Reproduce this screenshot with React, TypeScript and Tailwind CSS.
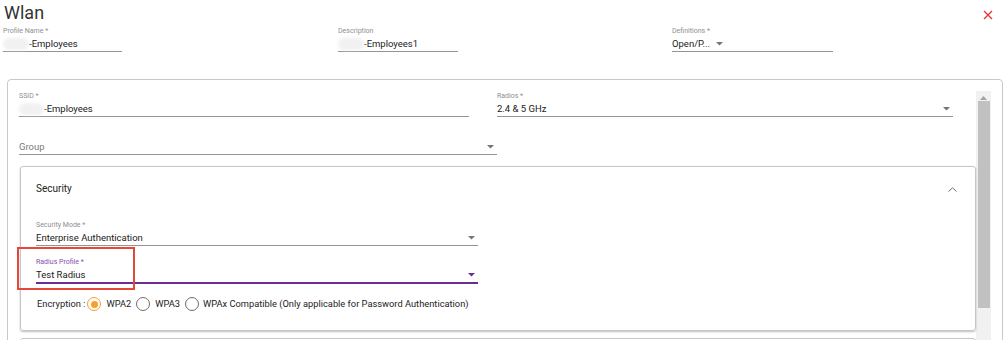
import React from 'react';

function Caret({ color = '#757575' }: { color?: string }) {
  return (
    <svg width="7" height="4" viewBox="0 0 7 4" className="shrink-0">
      <path d="M0 0h7L3.5 3.6z" fill={color} />
    </svg>
  );
}

function Blob({ w }: { w: number }) {
  return (
    <span
      className="inline-block h-[12px] shrink-0 rounded-full bg-[#f1f1f1] blur-[1.5px]"
      style={{ width: w }}
    />
  );
}

type FieldProps = {
  label?: string;
  value?: string;
  placeholder?: string;
  width: number;
  blob?: number;
  caret?: 'end' | 'inline';
  focused?: boolean;
  className?: string;
};

function Field({ label, value, placeholder, width, blob, caret, focused, className = '' }: FieldProps) {
  return (
    <div className={`flex flex-col ${className}`} style={{ width }}>
      <div
        className={`mb-[1px] h-[9px] text-[7px] leading-[9px] ${focused ? 'text-[#8a4db3]' : 'text-[#8f8f8f]'}`}
      >
        {label}
      </div>
      <div
        className={`flex h-[14px] items-center pr-[3px] ${
          focused ? 'border-b-2 border-[#6b2d91]' : 'border-b border-[#949494]'
        } box-content`}
      >
        {blob ? <Blob w={blob} /> : null}
        {value ? <span className="text-[9.5px] leading-[14px] text-[#212121] whitespace-nowrap">{value}</span> : null}
        {placeholder ? (
          <span className="text-[9.5px] leading-[14px] text-[#7a7a7a]">{placeholder}</span>
        ) : null}
        {caret === 'inline' ? (
          <span className="ml-[6px]">
            <Caret />
          </span>
        ) : null}
        {caret === 'end' ? (
          <span className="ml-auto">
            <Caret color={focused ? '#6b2d91' : '#757575'} />
          </span>
        ) : null}
      </div>
    </div>
  );
}

function Radio({ checked }: { checked?: boolean }) {
  return checked ? (
    <span className="flex h-[14px] w-[14px] items-center justify-center rounded-full border-[1.5px] border-[#f5a02a]">
      <span className="h-[7px] w-[7px] rounded-full bg-[#f5a02a]" />
    </span>
  ) : (
    <span className="h-[14px] w-[14px] rounded-full border-[1.5px] border-[#6e6e6e]" />
  );
}

export default function App() {
  return (
    <div className="h-[340px] w-[1008px] overflow-hidden bg-white font-['Roboto',sans-serif]">
      {/* header */}
      <div className="flex h-[27px] items-start justify-between">
        <h1 className="pl-[4px] pt-[2px] text-[18px] font-normal leading-[22px] text-[#333]">Wlan</h1>
        <svg width="10" height="10" viewBox="0 0 10 10" className="mr-[15px] mt-[10px]">
          <path d="M1 1l8 8M9 1l-8 8" stroke="#e53935" strokeWidth="1.4" />
        </svg>
      </div>

      {/* profile fields */}
      <div className="flex pl-[3px]">
        <Field label="Profile Name *" value="-Employees" width={119} blob={26} />
        <Field label="Description" value="-Employees1" width={120} blob={26} className="ml-[216px]" />
        <Field label="Definitions *" value="Open/P..." width={161} caret="inline" className="ml-[214px]" />
      </div>

      {/* main panel */}
      <div className="ml-[7px] mt-[27px] flex h-[300px] w-[996px] rounded-[4px] border border-[#c9c9c9] pt-[11px]">
        <div className="flex w-[968px] flex-col pl-[11px] pt-[1px]">
          <div className="flex">
            <Field label="SSID *" value="-Employees" width={450} blob={25} />
            <Field label="Radios *" value="2.4 & 5 GHz" width={456} caret="end" className="ml-[28px]" />
          </div>
          <Field placeholder="Group" width={478} caret="end" className="mt-[13px]" />

          {/* security card */}
          <div className="relative ml-[1px] mt-[11px] h-[166px] w-[956px] rounded-[3px] border border-[#c6c6c6] px-[15px] pt-[15px] shadow-[0_1px_2px_rgba(0,0,0,0.25)]">
            <div className="flex h-[14px] items-center justify-between">
              <span className="text-[10px] leading-[14px] text-[#222]">Security</span>
              <svg width="9" height="5" viewBox="0 0 9 5" className="mr-[3px]">
                <path d="M0.5 4.5L4.5 0.8L8.5 4.5" fill="none" stroke="#6a6a6a" strokeWidth="1" />
              </svg>
            </div>
            <Field
              label="Security Mode *"
              value="Enterprise Authentication"
              width={442}
              caret="end"
              className="mt-[25px]"
            />
            <Field label="Radius Profile *" value="Test Radius" width={442} caret="end" focused className="mt-[12px]" />
            <div className="mt-[10px] flex h-[20px] items-center pl-[1px] text-[9.3px] text-[#222]">
              <span className="mr-[2px]">Encryption :</span>
              <Radio checked />
              <span className="ml-[5px] mr-[5px]">WPA2</span>
              <Radio />
              <span className="ml-[5px] mr-[5px]">WPA3</span>
              <Radio />
              <span className="ml-[4px]">WPAx Compatible (Only applicable for Password Authentication)</span>
            </div>

            {/* highlight annotation */}
            <div className="absolute left-[-4px] top-[80px] h-[43px] w-[118px] border-2 border-[#e5473a]" />
          </div>

          <div className="ml-[1px] mt-[7px] h-[40px] w-[956px] rounded-[3px] border border-[#c6c6c6]" />
        </div>

        {/* scrollbar */}
        <div className="flex w-[15px] flex-col items-center bg-[#f1f1f1]">
          <svg width="7" height="4" viewBox="0 0 7 4" className="mt-[5px]">
            <path d="M0 4h7L3.5 0z" fill="#a3a3a3" />
          </svg>
          <div className="mt-[1px] h-[207px] w-[12px] bg-[#c1c1c1]" />
        </div>
        <div className="w-[11px]" />
      </div>
    </div>
  );
}
